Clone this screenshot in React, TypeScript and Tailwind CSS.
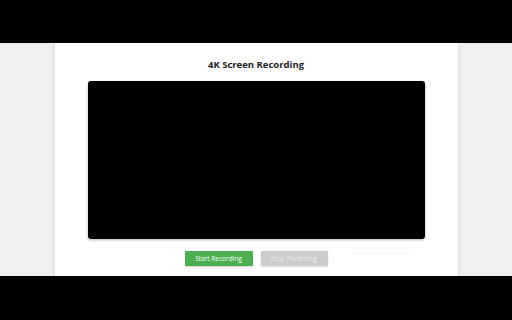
import React from 'react';

export default function App() {
  return (
    <div className="flex h-[320px] w-[512px] flex-col overflow-hidden bg-black font-['Open_Sans',sans-serif]">
      <div className="h-[43px] shrink-0 bg-black" />
      <div className="flex h-[233px] shrink-0 justify-center overflow-hidden bg-[#f0f0f0]">
        <div className="flex h-[260px] w-[403px] flex-col items-center bg-white px-[32px] pt-[14px] shadow-[0_0_6px_rgba(0,0,0,0.12)]">
          <h1 className="text-[9.5px] font-bold leading-[16px] text-[#222]">4K Screen Recording</h1>
          <div className="mt-[8px] h-[158px] w-[337px] rounded-[3px] bg-black shadow-[0_1px_3px_rgba(0,0,0,0.3)]" />
          <div className="relative mt-[12px] flex w-full justify-center gap-[8px]">
            <button className="h-[15px] w-[68px] rounded-[1px] bg-[#4caf50] text-[6.5px] font-normal text-white shadow-[0_1px_2px_rgba(0,0,0,0.2)]">
              Start Recording
            </button>
            <button className="h-[15px] w-[67px] rounded-[1px] bg-[#cccccc] text-[6.5px] font-normal text-[#ececec] shadow-[0_1px_2px_rgba(0,0,0,0.15)]" disabled>
              Stop Recording
            </button>
            <div className="absolute left-[262px] top-[2px] h-[1px] w-[65px] bg-[#f6f6f6]" />
          </div>
        </div>
      </div>
      <div className="flex-1 bg-black" />
    </div>
  );
}
